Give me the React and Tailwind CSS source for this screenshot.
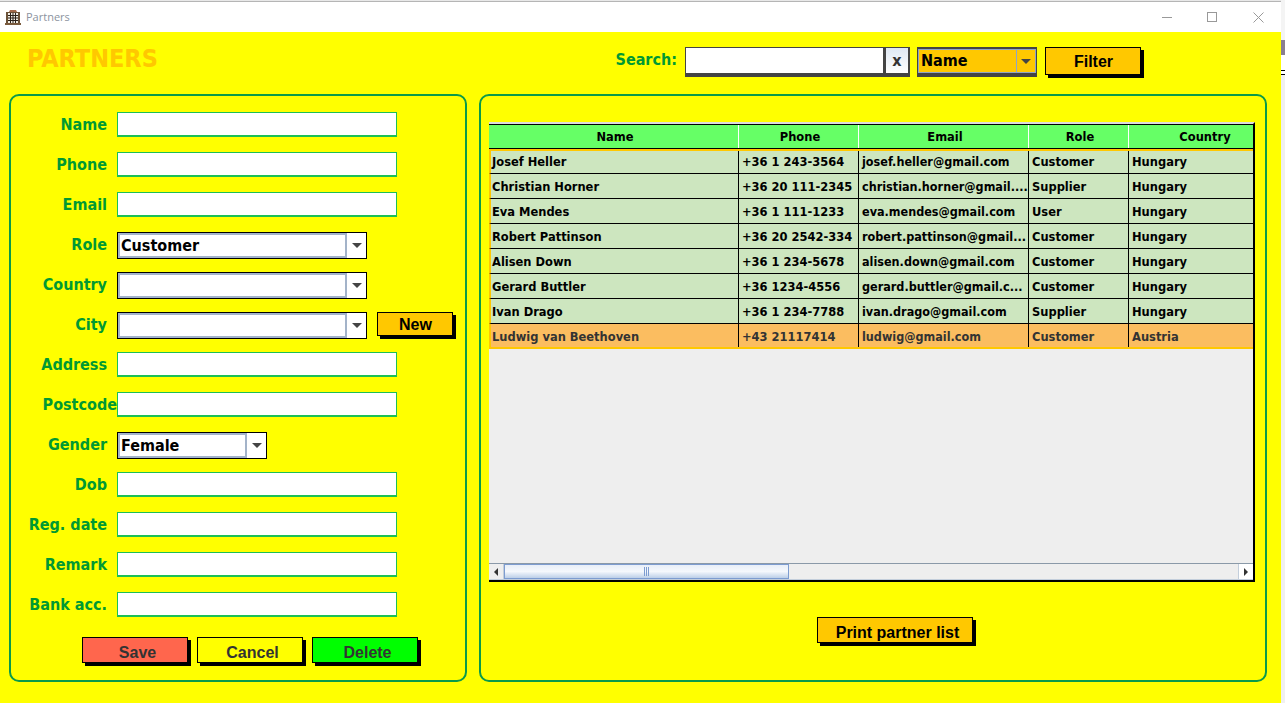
import React from 'react';

const uiFont = "font-['DejaVu_Sans_Condensed','DejaVu_Sans',sans-serif]";
const btnFont = "font-['Liberation_Sans',Arial,sans-serif]";

const columns = [
  { title: 'Name', width: 'w-[250px]', head: 'pl-[3px]' },
  { title: 'Phone', width: 'w-[120px]', head: 'pl-[3px]' },
  { title: 'Email', width: 'w-[170px]', head: 'pl-[3px]' },
  { title: 'Role', width: 'w-[100px]', head: 'pl-[3px]' },
  { title: 'Country', width: 'w-[124px]', head: 'pl-[28px]' },
];

const partners = [
  ['Josef Heller', '+36 1 243-3564', 'josef.heller@gmail.com', 'Customer', 'Hungary'],
  ['Christian Horner', '+36 20 111-2345', 'christian.horner@gmail....', 'Supplier', 'Hungary'],
  ['Eva Mendes', '+36 1 111-1233', 'eva.mendes@gmail.com', 'User', 'Hungary'],
  ['Robert Pattinson', '+36 20 2542-334', 'robert.pattinson@gmail...', 'Customer', 'Hungary'],
  ['Alisen Down', '+36 1 234-5678', 'alisen.down@gmail.com', 'Customer', 'Hungary'],
  ['Gerard Buttler', '+36 1234-4556', 'gerard.buttler@gmail.c...', 'Customer', 'Hungary'],
  ['Ivan Drago', '+36 1 234-7788', 'ivan.drago@gmail.com', 'Supplier', 'Hungary'],
  ['Ludwig van Beethoven', '+43 21117414', 'ludwig@gmail.com', 'Customer', 'Austria'],
];

function BuildingIcon() {
  return (
    <svg width="16" height="16" viewBox="0 0 16 16">
      <path d="M5 1h6l1 2H4z" fill="#a5694a" />
      <rect x="1" y="3" width="14" height="12" fill="#6b5238" />
      <rect x="3" y="4" width="10" height="10" fill="#f3efe6" />
      <path d="M3 6.5h10M3 9h10M3 11.5h10M5.5 4v10M8 4v10M10.5 4v10" stroke="#2a2018" strokeWidth="1" />
      <rect x="0" y="14" width="16" height="2" fill="#7a5a3c" />
    </svg>
  );
}

function Arrow({ color = '#444444' }) {
  return <span className="w-0 h-0 border-x-[5px] border-x-transparent border-t-[5px]" style={{ borderTopColor: color }} />;
}

function TextField() {
  return <div className="w-[280px] h-[25px] bg-white border border-b-2 border-[#1dbf55]" />;
}

function Combo({ value, width }) {
  return (
    <div className={`${width} h-[27px] flex bg-white border border-black`}>
      <div className="flex-1 flex items-center pl-[1px] border-2 border-[#a3b3c9] bg-white">
        <span className={`${uiFont} text-[16px] font-bold text-black`}>{value}</span>
      </div>
      <div className="w-[19px] flex items-center justify-center">
        <Arrow />
      </div>
    </div>
  );
}

function ShadowButton({ label, className, textClass = 'text-black', indent = 'pl-0' }) {
  return (
    <button className={`${className} ${btnFont} ${textClass} ${indent} border border-black text-[16px] font-bold shadow-[3px_3px_0_#000]`}>
      {label}
    </button>
  );
}

function FormRow({ label, tight, children }) {
  return (
    <div className="flex h-[25px] items-start">
      <div className={`w-[106px] h-[25px] flex items-center justify-end whitespace-nowrap ${tight ? 'pr-0' : 'pr-[10px]'} ${uiFont} text-[16px] font-bold text-[#009933]`}>
        {label}
      </div>
      {children}
    </div>
  );
}

function PartnerForm() {
  return (
    <div className="w-[458px] h-[588px] border-2 border-[#0a9a4a] rounded-[10px] pt-[16px]">
      <div className="flex flex-col gap-[15px]">
        <FormRow label="Name"><TextField /></FormRow>
        <FormRow label="Phone"><TextField /></FormRow>
        <FormRow label="Email"><TextField /></FormRow>
        <FormRow label="Role"><Combo value="Customer" width="w-[250px]" /></FormRow>
        <FormRow label="Country"><Combo value="" width="w-[250px]" /></FormRow>
        <FormRow label="City">
          <Combo value="" width="w-[250px]" />
          <ShadowButton label="New" indent="pl-[1px]" className="w-[76px] h-[24px] ml-[10px] bg-[#ffc800]" />
        </FormRow>
        <FormRow label="Address"><TextField /></FormRow>
        <FormRow label="Postcode" tight><TextField /></FormRow>
        <FormRow label="Gender"><Combo value="Female" width="w-[150px]" /></FormRow>
        <FormRow label="Dob"><TextField /></FormRow>
        <FormRow label="Reg. date"><TextField /></FormRow>
        <FormRow label="Remark"><TextField /></FormRow>
        <FormRow label="Bank acc."><TextField /></FormRow>
      </div>
      <div className="flex mt-[20px] ml-[71px]">
        <ShadowButton label="Save" className="w-[106px] h-[26px] bg-[#ff664d] border-[#333]" textClass="text-[#333333]" indent="pl-[5px] pt-[3px]" />
        <ShadowButton label="Cancel" className="w-[106px] h-[26px] ml-[9px] bg-[#ffff00] border-[#333]" textClass="text-[#333333]" indent="pl-[5px] pt-[3px]" />
        <ShadowButton label="Delete" className="w-[106px] h-[26px] ml-[9px] bg-[#00ff00] border-[#333]" textClass="text-[#333333]" indent="pl-[5px] pt-[3px]" />
      </div>
    </div>
  );
}

function ScrollBar() {
  return (
    <div className="h-[17px] flex bg-[#eeeeee] border-t border-[#8a99a8] border-b border-b-[#c3cedb]">
      <div className="w-[15px] flex items-center justify-center border-r border-[#c3cedb]">
        <span className="w-0 h-0 border-y-[4px] border-y-transparent border-r-[4px] border-r-[#333]" />
      </div>
      <div className="w-[285px] flex items-center justify-center gap-[1px] border border-[#7d9cd0] bg-gradient-to-b from-[#e8eef8] via-[#f5f8fc] to-[#bccfe8]">
        <span className="w-px h-[9px] bg-[#7d9cd0]" />
        <span className="w-px h-[9px] bg-[#7d9cd0]" />
        <span className="w-px h-[9px] bg-[#7d9cd0]" />
      </div>
      <div className="flex-1" />
      <div className="w-[15px] flex items-center justify-center border-l border-[#c3cedb] bg-white">
        <span className="w-0 h-0 border-y-[4px] border-y-transparent border-l-[4px] border-l-[#333]" />
      </div>
    </div>
  );
}

function cellPadding(rowIndex, colIndex) {
  if (rowIndex === 0) return 'pt-0';
  // 12.5px email text rounds up a pixel in the shorter selected row
  if (rowIndex === partners.length - 1 && colIndex === 2) return 'pt-[4px]';
  return 'pt-[2px]';
}

function PartnerTable() {
  return (
    <div className={`w-[766px] h-[460px] flex flex-col border-t-2 border-t-[#dddddd] border-r-2 border-r-black border-b-2 border-b-black ${uiFont} text-[12.75px] font-bold text-black`}>
      <div className="flex h-[25px] bg-[#66ff66] border-t border-black border-b border-b-black shrink-0">
        {columns.map((col) => (
          <div key={col.title} className={`${col.width} ${col.head} flex items-center justify-center border-r border-white last:border-r-0`}>
            {col.title}
          </div>
        ))}
      </div>
      <div className="flex-1 flex flex-col bg-[#eeeeee] border-t-2 border-t-[#ffc800]">
        {partners.map((row, i) => {
          const selected = i === partners.length - 1;
          return (
            <div
              key={row[0]}
              className={`flex shrink-0 border-l-2 border-l-[#ffc800] ${i === 0 ? 'h-[23px]' : 'h-[25px]'} ${selected ? 'bg-[#fbbd60] text-[#333333] border-b-2 border-b-[#ffc800]' : 'bg-[#cde6bf] border-b border-b-black'}`}
            >
              {row.map((cell, c) => (
                <div
                  key={c}
                  className={`${c === 0 ? 'w-[248px] pl-[1px]' : `${columns[c].width} pl-[3px]`} ${c === 2 ? 'text-[12.5px]' : ''} ${cellPadding(i, c)} flex items-center whitespace-nowrap overflow-hidden border-r border-black last:border-r-0`}
                >
                  {cell}
                </div>
              ))}
            </div>
          );
        })}
        <div className="flex-1" />
        <ScrollBar />
      </div>
    </div>
  );
}

export default function App() {
  return (
    <div className="w-[1285px] h-[703px] overflow-hidden flex bg-white">
      <div className="w-[1281px] h-[703px] flex flex-col shrink-0">
        <div className="h-[2px] bg-[#b5b5b5] border-t border-[#e8e8e8]" />
        <div className="h-[30px] bg-white flex items-center pl-[5px]">
          <BuildingIcon />
          <span className="ml-[5px] font-['Open_Sans',sans-serif] text-[11px] text-[#8c93a0]">Partners</span>
          <div className="ml-auto flex items-center text-[#999999]">
            <span className="w-[10px] h-px bg-[#999999]" />
            <span className="w-[10px] h-[10px] ml-[35px] border border-[#999999]" />
            <svg className="ml-[36px] mr-[17px]" width="11" height="11" viewBox="0 0 11 11">
              <path d="M0.5 0.5l10 10M10.5 0.5l-10 10" stroke="#999999" strokeWidth="1" />
            </svg>
          </div>
        </div>
        <div className="flex-1 bg-[#ffff00] flex flex-col">
          <div className="h-[62px] flex items-start">
            <h1 className={`ml-[27px] mt-[12px] ${uiFont} text-[25px] leading-[30px] font-bold text-[#ffc800]`}>PARTNERS</h1>
            <div className="ml-auto flex items-start mr-[140px] pt-[15px]">
              <span className={`mt-[2px] mr-[8px] ${uiFont} text-[16px] leading-[22px] font-bold text-[#009933]`}>Search:</span>
              <div className="w-[225px] h-[30px] flex bg-[#444444] pt-px pl-px pr-[2px] pb-[4px]">
                <div className="flex-1 bg-white" />
                <div className={`w-[22px] ml-[3px] flex items-center justify-center bg-gradient-to-b from-[#dfe8f3] to-white ${uiFont} text-[16px] font-bold text-[#333]`}>x</div>
              </div>
              <div className="w-[120px] h-[30px] ml-[7px] flex bg-[#ffc800] border border-[#444444] border-b-[4px] border-t-2">
                <div className={`flex-1 flex items-center pl-[2px] border border-[#8fa5c8] ${uiFont} text-[16px] font-bold text-black`}>Name</div>
                <div className="w-[19px] flex items-center justify-center border-y border-r border-[#8fa5c8]">
                  <Arrow />
                </div>
              </div>
              <ShadowButton label="Filter" indent="pt-[2px] pl-[1px]" className="w-[96px] h-[28px] ml-[8px] bg-[#ffc800]" />
            </div>
          </div>
          <div className="flex pl-[9px] gap-[12px]">
            <PartnerForm />
            <div className="w-[788px] h-[588px] border-2 border-[#0a9a4a] rounded-[10px] pt-[26px] pl-[8px]">
              <PartnerTable />
              <ShadowButton label="Print partner list" indent="pl-[5px] pt-[3px]" className="block w-[156px] h-[26px] mt-[35px] ml-[328px] bg-[#ffc800]" />
            </div>
          </div>
        </div>
      </div>
      <div className="flex-1 flex flex-col">
        <div className="h-[40px] bg-[#f4f4f4]" />
        <div className="h-[15px] bg-[#8a7f90]" />
        <div className="h-[15px] bg-white" />
        <div className="h-px bg-black" />
        <div className="h-[3px] bg-white" />
        <div className="h-px bg-black" />
        <div className="flex-1 bg-[#f0f0f0]" />
      </div>
    </div>
  );
}
